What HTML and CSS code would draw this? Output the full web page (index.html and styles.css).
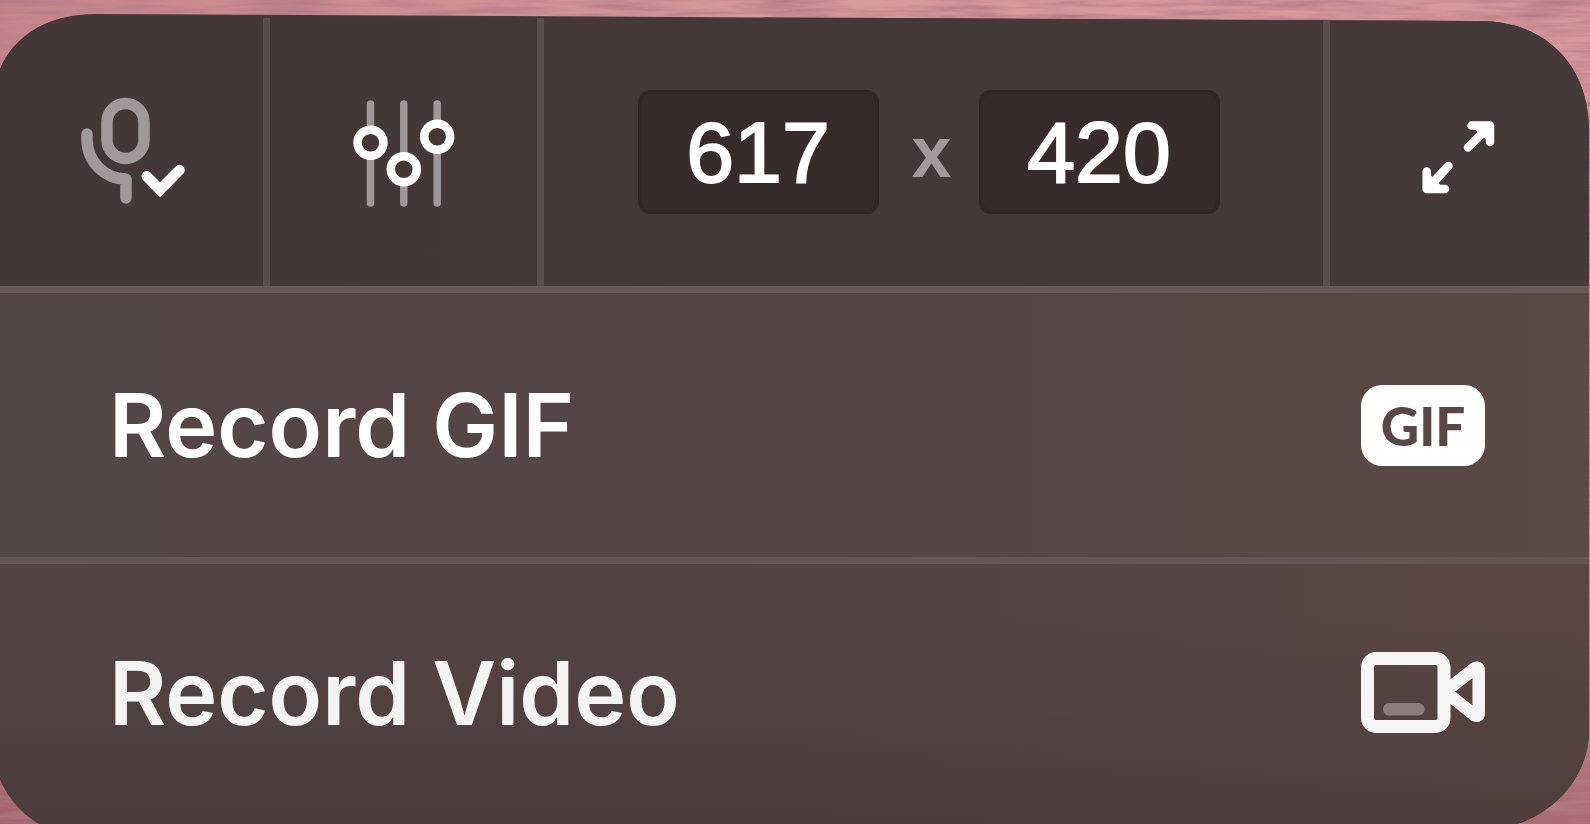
FILE: index.html
```html
<!DOCTYPE html>
<html lang="en">
<head>
    <meta charset="UTF-8">
    <title>Recorder</title>
    <link rel="stylesheet" href="styles.css">
</head>
<body>
    <svg class="wallpaper" aria-hidden="true">
        <defs>
            <filter id="grain" x="0" y="0" width="100%" height="100%">
                <feTurbulence type="fractalNoise" baseFrequency="0.012 0.14" numOctaves="4" seed="4"/>
                <feColorMatrix values="0 0 0 0 0.45  0 0 0 0 0.2  0 0 0 0 0.24  2 0 0 0 -0.7"/>
            </filter>
            <clipPath id="panel-shape" clipPathUnits="objectBoundingBox">
                <path transform="scale(0.00062893 0.00120337)" d="M-8 110C-8 50 35 14 95 14L1480 21C1545 21 1589 65 1589 130V730C1589 785 1540 829 1485 829L85 836C30 836 -8 790 -8 740Z"/>
            </clipPath>
        </defs>
        <rect width="100%" height="100%" filter="url(#grain)"/>
    </svg>
    <main class="panel">
        <div class="toolbar">
            <button class="tool" aria-label="Microphone">
                <svg width="150" height="140" viewBox="0 0 150 140" fill="none" stroke-linecap="round">
                    <g class="dim" stroke-width="11.5" stroke-linejoin="round">
                        <rect x="50" y="21.6" width="37" height="54.8" rx="18.5"/>
                        <path d="M30 52V57C30 80 48 97 69 97V116"/>
                    </g>
                    <path class="bright" stroke-width="10.5" d="M89.7 94.3L103 107.7L122.5 88"/>
                </svg>
            </button>
            <button class="tool" aria-label="Settings">
                <svg width="150" height="140" viewBox="0 0 150 140" stroke-linecap="round">
                    <path class="dim" stroke-width="7.5" d="M41.5 22V121M74.8 22V121M108.2 22V121"/>
                    <g class="bright knob" stroke-width="8.5">
                        <circle cx="41.5" cy="60.7" r="13"/>
                        <circle cx="74.8" cy="87.3" r="13"/>
                        <circle cx="108.2" cy="54.7" r="13"/>
                    </g>
                </svg>
            </button>
            <div class="size">
                <input class="size-input" type="text" aria-label="Width" value="617">
                <span class="times">x</span>
                <input class="size-input" type="text" aria-label="Height" value="420">
            </div>
            <button class="tool" aria-label="Full screen">
                <svg width="90" height="90" viewBox="0 0 90 90" fill="none" stroke-linecap="round" stroke-linejoin="round">
                    <path class="bright" stroke-width="8.5" d="M56.5 18.5H75V35M72 21.5L53 40.5M11.7 64.5V82H30M14.7 79L33.5 59"/>
                    <path class="bright arrow" stroke-width="2" d="M61 22H72V32ZM15 69V79H25Z"/>
                </svg>
            </button>
        </div>
        <button class="row">
            <span>Record GIF</span>
            <span class="badge" aria-hidden="true">GIF</span>
        </button>
        <button class="row row-video">
            <span>Record Video</span>
            <svg width="124" height="81" viewBox="0 0 124 81" fill="none">
                <rect class="soft" x="6.5" y="6.5" width="76.5" height="68" rx="8.5" stroke-width="13"/>
                <path class="soft" stroke-width="12.5" stroke-linejoin="round" d="M84 39.7L113.5 16.5Q117.7 14.5 117.7 18V61.5Q117.7 65 113.5 63Z"/>
                <rect class="bar" x="22" y="51" width="41.5" height="12.5" rx="6"/>
            </svg>
        </button>
    </main>
</body>
</html>
```
FILE: styles.css
```css
body,html{
    margin: 0;
    padding: 0;
    overflow: hidden;
    font-family: Inter, "Liberation Sans", sans-serif;
}
body{
    background: linear-gradient(rgba(120,60,70,0) 60%, rgba(120,60,70,.5)), linear-gradient(90deg, #c58589, #d8999a 50%, #d8999b);
}
button{
    margin: 0;
    padding: 0;
    border: 0;
    background: none;
    font: inherit;
    color: inherit;
    cursor: pointer;
}
.wallpaper{
    position: absolute;
    top: 0;
    left: 0;
    width: 100%;
    height: 100%;
}
.panel{
    position: relative;
    box-sizing: border-box;
    min-height: 100vh;
    padding-top: 18px;
    color: #fff;
    background: linear-gradient(90deg, #443739, #4a3c3c);
    clip-path: url(#panel-shape);
}
.toolbar{
    display: grid;
    grid-template-columns: 270px 274px 1fr 260px;
    height: 268px;
    border-bottom: 7px solid #685858;
    background: linear-gradient(90deg, #433738, #463939);
}
.tool,.size{
    display: flex;
    align-items: center;
    justify-content: center;
    border-right: 7px solid #5a4d4e;
}
.tool:last-child{
    border-right: 0;
}
.size{
    padding-right: 10px;
}
.size-input{
    box-sizing: border-box;
    width: 241px;
    height: 124px;
    padding: 0;
    border: 4px solid #332627;
    border-radius: 12px;
    background-color: #372b2b;
    color: #fff;
    font-family: "Liberation Sans", Arial, sans-serif;
    font-size: 86px;
    text-align: center;
    -webkit-text-stroke: 2px #fff;
}
.times{
    box-sizing: border-box;
    width: 100px;
    padding-left: 6px;
    color: #a3999b;
    font-family: "Liberation Sans", Arial, sans-serif;
    font-size: 72px;
    font-weight: bold;
    line-height: 80px;
    text-align: center;
}
.dim{
    stroke: #a1989a;
}
.bright{
    stroke: #fff;
}
.soft{
    stroke: #f6f5f5;
}
.knob{
    fill: #433738;
}
.arrow{
    fill: #fff;
}
.bar{
    fill: #8b7d7d;
}
.row{
    display: flex;
    align-items: center;
    justify-content: space-between;
    box-sizing: border-box;
    width: 100%;
    height: 264px;
    padding: 0 105px 0 109px;
    background: linear-gradient(90deg, #524746, #554546 20%, #564546 50%, #5b4946);
    font-size: 88px;
    font-weight: 600;
    line-height: 100px;
}
.row-video{
    height: 274px;
    padding-bottom: 10px;
    border-top: 7px solid #665556;
    background: linear-gradient(rgba(67,54,53,0) 20%, rgba(67,54,53,.55)), linear-gradient(90deg, #534445, #554345 50%, #5a4745);
    color: #f5f4f4;
}
.badge{
    width: 124px;
    border-radius: 21px;
    background-color: #fff;
    color: #594646;
    font-family: Lato, sans-serif;
    font-size: 53px;
    font-weight: 900;
    line-height: 81px;
    text-align: center;
}
```
